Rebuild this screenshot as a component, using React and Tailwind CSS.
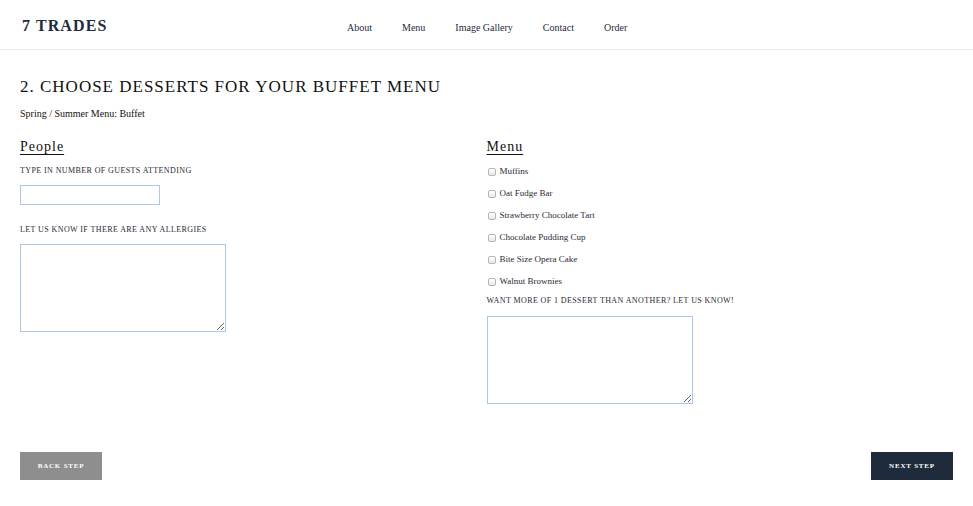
import React from 'react';

const serif = { fontFamily: '"Liberation Serif", "DejaVu Serif", serif' };

const navItems = ['About', 'Menu', 'Image Gallery', 'Contact', 'Order'];
const desserts = ['Muffins', 'Oat Fudge Bar', 'Strawberry Chocolate Tart', 'Chocolate Pudding Cup', 'Bite Size Opera Cake', 'Walnut Brownies'];

const Label = ({ children, className = '' }) => (
    <div className={`text-[8px] uppercase tracking-[0.4px] text-[#1f2a37] ${className}`}>{children}</div>
);

const Heading = ({ children }) => (
    <h3 className="text-[14px] leading-none tracking-[1px] text-[#111] underline underline-offset-[3px] decoration-1">{children}</h3>
);

export default function App() {
    return (
        <div className="w-[973px] h-[506px] bg-white text-[#1f2a37] overflow-hidden" style={serif}>
            <header className="h-[50px] border-b border-[#e3edf1] flex items-center px-[22px]">
                <div className="text-[16px] font-bold tracking-[1.1px] text-[#1e2b3c] w-[325px] mt-[2px]">7 TRADES</div>
                <nav className="flex items-center gap-[30px] text-[10px] text-[#1e2b3c] mt-[6px]">
                    {navItems.map(n => <span key={n}>{n}</span>)}
                </nav>
            </header>

            <main className="px-[20px]">
                <h1 className="mt-[28px] text-[17px] leading-none tracking-[1px] text-[#111] uppercase">2. Choose desserts for your buffet menu</h1>
                <p className="mt-[14px] text-[10px] leading-none text-[#111]">Spring / Summer Menu: Buffet</p>

                <div className="grid grid-cols-2 mt-[21px]">
                    <div>
                        <Heading>People</Heading>
                        <Label className="mt-[11px]">Type in number of guests attending</Label>
                        <input className="block mt-[8px] w-[140px] h-[20px] border border-[#a9c8ee] outline-none" />
                        <Label className="mt-[19px]">Let us know if there are any allergies</Label>
                        <textarea className="block mt-[8px] w-[206px] h-[88px] border border-[#a9c8ee] outline-none resize" />
                    </div>
                    <div>
                        <Heading>Menu</Heading>
                        <div className="mt-[12px] flex flex-col gap-[10px]">
                            {desserts.map(d => (
                                <label key={d} className="flex items-center h-[12px] text-[9px] text-[#1f2a37]">
                                    <span className="w-[8px] h-[8px] ml-[1px] mr-[4px] rounded-[2px] border border-[#b5b5b5] bg-gradient-to-b from-white to-[#e8e8e8]" />
                                    {d}
                                </label>
                            ))}
                        </div>
                        <Label className="mt-[7px]">Want more of 1 dessert than another? Let us know!</Label>
                        <textarea className="block mt-[9px] w-[206px] h-[88px] border border-[#a9c8ee] outline-none resize" />
                    </div>
                </div>

                <div className="flex justify-between mt-[48px]">
                    <button className="w-[82px] h-[28px] bg-[#8e8e8e] text-white text-[7px] font-bold tracking-[0.8px] uppercase">Back Step</button>
                    <button className="w-[82px] h-[28px] bg-[#1e2b3c] text-white text-[7px] font-bold tracking-[0.8px] uppercase">Next Step</button>
                </div>
            </main>
        </div>
    );
}
